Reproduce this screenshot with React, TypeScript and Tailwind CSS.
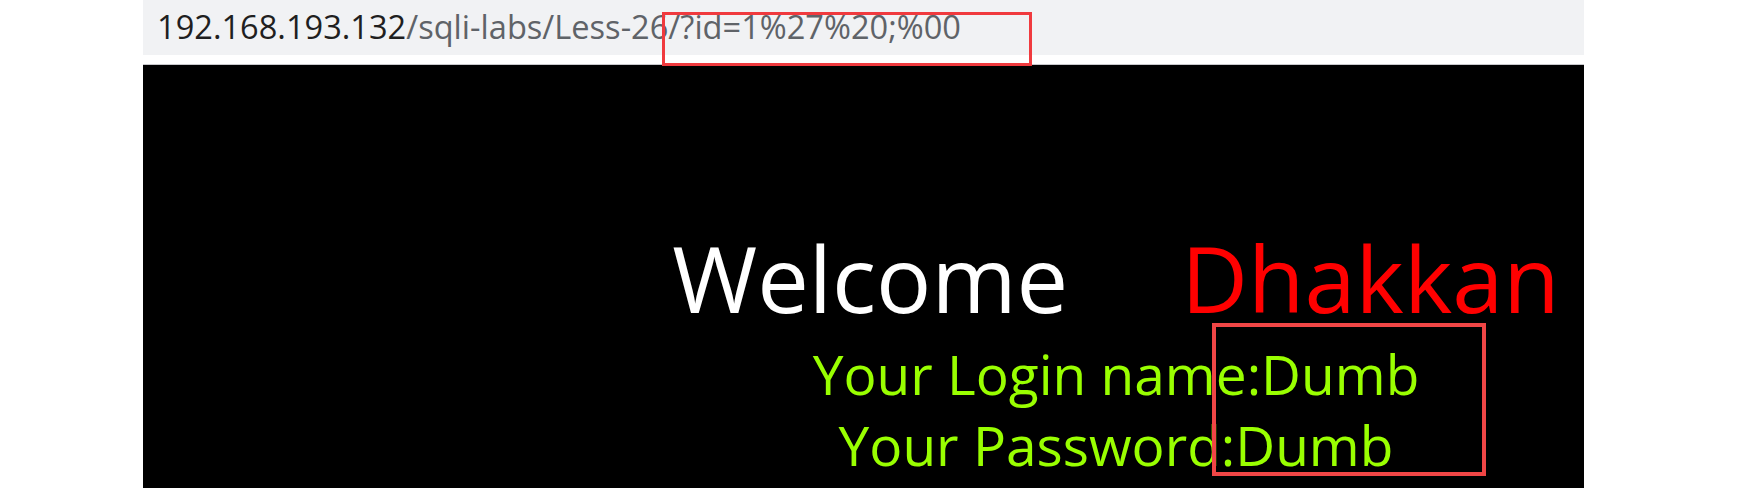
import React from "react";

export default function App() {
  return (
    <div className="relative w-[1757px] h-[488px] bg-white overflow-hidden">
      <div className="ml-[143px] w-[1441px] h-full flex flex-col">
        <div className="h-[55px] bg-[#f1f2f4] flex items-center pl-[14px] shrink-0">
          <span className="text-[32.6px] leading-none whitespace-nowrap" style={{ fontFamily: '"Open Sans", sans-serif' }}>
            <span className="text-[#1f1f1f]">192.168.193.132</span>
            <span className="text-[#5f6368]">/sqli-labs/Less-26/?id=1%27%20;%00</span>
          </span>
        </div>
        <div className="h-[9px] bg-white shrink-0" />
        <div className="h-px bg-[#c8c8cc] shrink-0" />
        <div className="flex-1 bg-black flex flex-col items-center pl-[505px] pt-[165px]" style={{ fontFamily: '"Open Sans", sans-serif' }}>
          <div className="text-[92px] leading-[96px] text-white whitespace-nowrap">
            Welcome<span className="inline-block w-[113px]" /><span className="text-[#ff0000]">Dhakkan</span>
          </div>
          <div className="mt-[13px] text-[55px] leading-[70px] text-[#99ff00] whitespace-nowrap">Your Login name:Dumb</div>
          <div className="text-[55px] leading-[71px] text-[#99ff00] whitespace-nowrap">Your Password:Dumb</div>
        </div>
      </div>
      <div className="absolute left-[662px] top-[12px] w-[370px] h-[54px] border-[3px] border-[#f03a3e]" />
      <div className="absolute left-[1212px] top-[323px] w-[274px] h-[153px] border-[4px] border-[#f04545]" />
    </div>
  );
}
